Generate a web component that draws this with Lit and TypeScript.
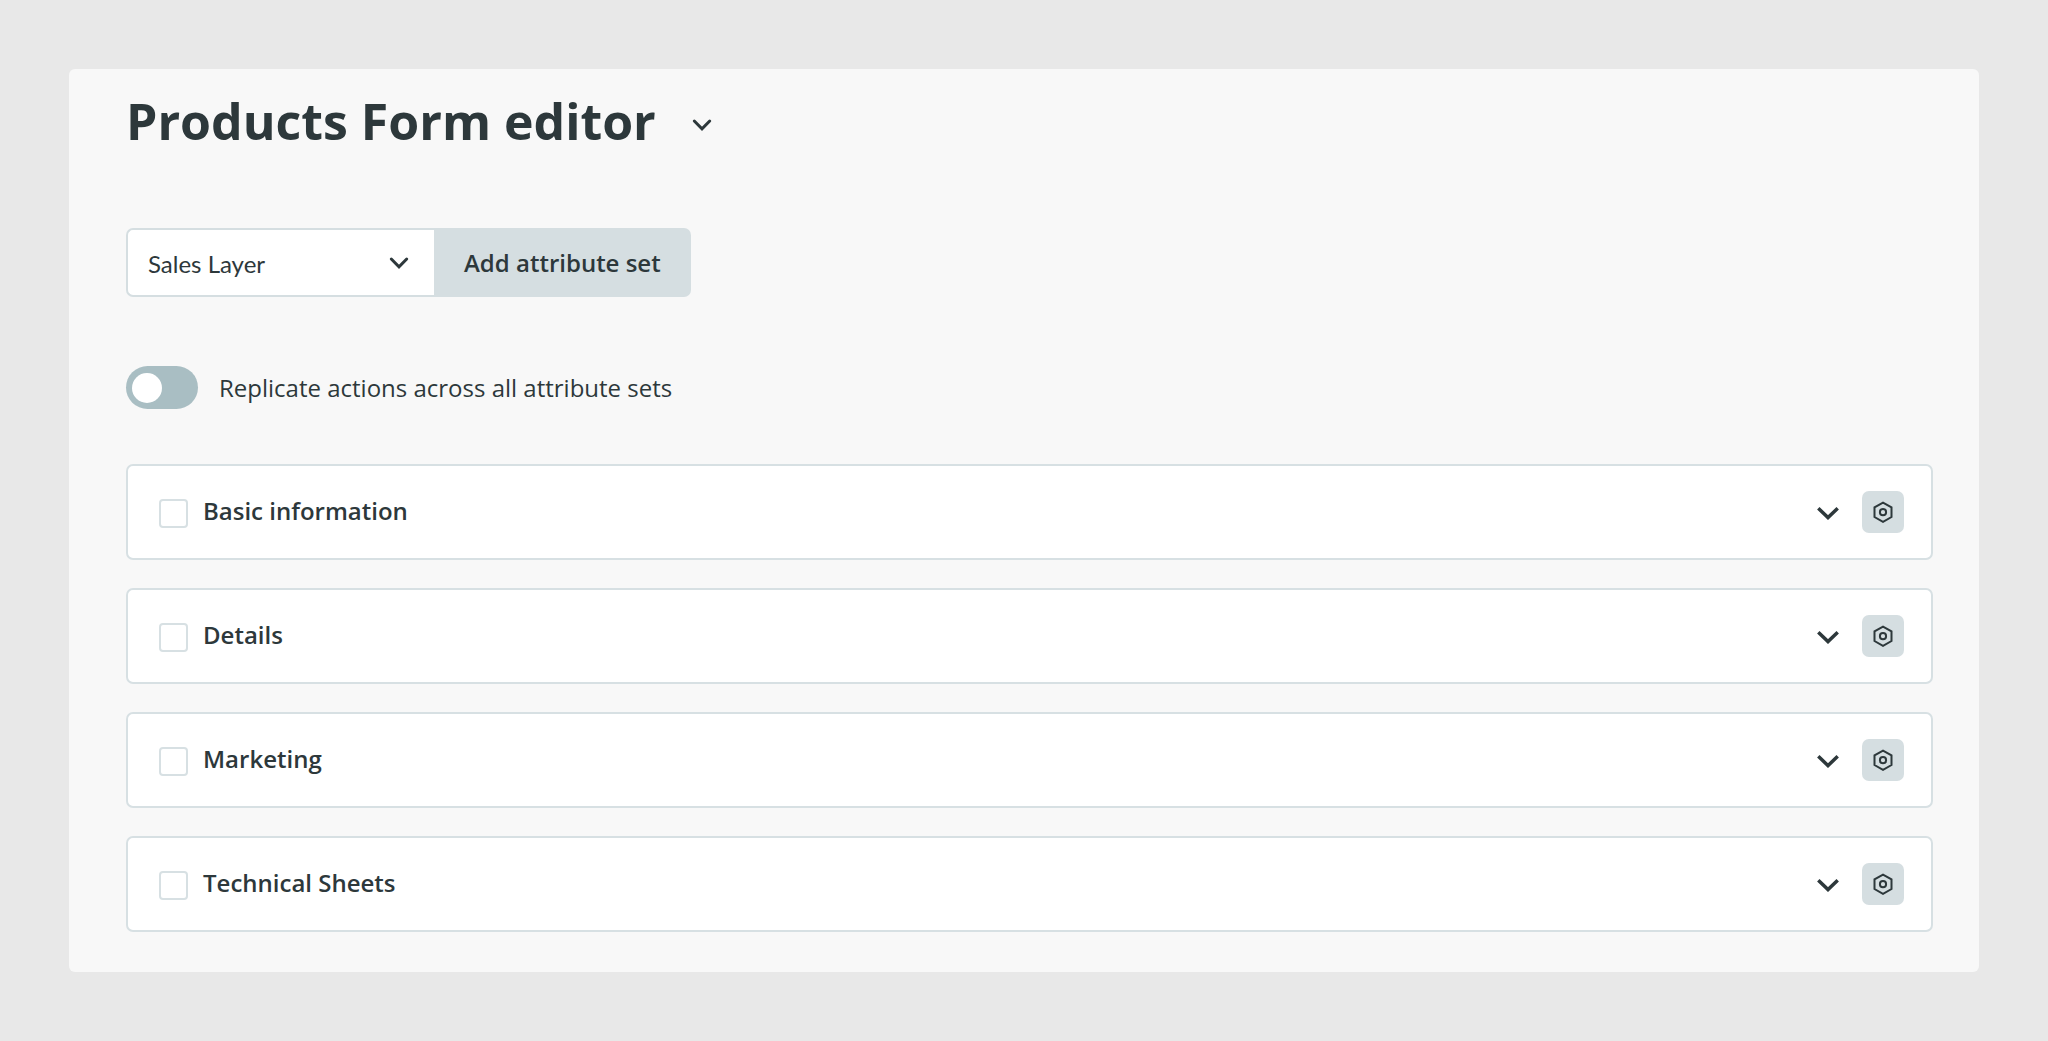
import { LitElement, html, css } from "lit";
import { customElement, property, state } from "lit/decorators.js";

/** One collapsible attribute set: tick box, name, expander and settings. */
@customElement("attribute-set")
export class AttributeSet extends LitElement {
  @property() name = "";
  @state() private open = false;

  static styles = css`
    :host {
      display: block;
      font-family: "Open Sans", "Noto Sans", sans-serif;
      color: #2d383b;
    }
    .card {
      box-sizing: border-box;
      display: flex;
      align-items: center;
      min-height: 96px;
      padding: 0 27px 0 31px;
      background: #ffffff;
      border: 2px solid #d7e0e3;
      border-radius: 7px;
    }
    .label {
      flex: 1;
      display: flex;
      align-items: center;
      gap: 15px;
      padding-bottom: 2px;
      font-size: 24px;
      line-height: 32px;
      font-weight: 600;
    }
    .tick {
      appearance: none;
      box-sizing: border-box;
      flex: none;
      width: 29px;
      height: 29px;
      margin: 4px 0 0;
      background: #ffffff;
      border: 2px solid #d7e0e3;
      border-radius: 4px;
    }
    .tick:checked {
      background: #a9bec3;
    }
    .actions {
      display: flex;
      align-items: center;
      gap: 18px;
    }
    .expand,
    .settings {
      display: grid;
      place-items: center;
      padding: 0;
      border: 0;
      color: inherit;
      cursor: pointer;
    }
    .expand {
      width: 32px;
      height: 42px;
      background: transparent;
    }
    .settings {
      width: 42px;
      height: 42px;
      background: #d5dee1;
      border-radius: 7px;
    }
    svg {
      display: block;
      fill: none;
      stroke: currentColor;
    }
  `;

  render() {
    return html`
      <div class="card">
        <label class="label"><input class="tick" type="checkbox" />${this.name}</label>
        <div class="actions">
          <button
            class="expand"
            aria-label="Expand ${this.name}"
            aria-expanded=${this.open ? "true" : "false"}
            @click=${() => (this.open = !this.open)}
          >
            <svg width="24" height="16" viewBox="0 0 24 16" stroke-width="3.5">
              <path d="M2.3 4.3 12 13.6 21.7 4.3" />
            </svg>
          </button>
          <button class="settings" aria-label="Settings for ${this.name}">
            <svg width="24" height="24" viewBox="0 0 24 24" stroke-width="2">
              <path d="M12 2.6 20.5 7.4v9.6L12 21.8 3.5 17V7.4z" />
              <circle cx="12" cy="12.2" r="3.1" />
            </svg>
          </button>
        </div>
      </div>
    `;
  }
}

@customElement("app-root")
export class AppRoot extends LitElement {
  private sets = ["Basic information", "Details", "Marketing", "Technical Sheets"];

  static styles = css`
    :host {
      display: block;
      box-sizing: border-box;
      min-height: 100vh;
      padding: 69px;
      background: #e8e8e8;
      color: #2d383b;
      font-family: "Open Sans", "Noto Sans", sans-serif;
    }
    .panel {
      padding: 17px 46px 40px 57px;
      background: #f8f8f8;
      border-radius: 6px;
    }
    .header {
      display: flex;
      align-items: center;
      gap: 28px;
      height: 70px;
    }
    .title {
      margin: 0;
      font-size: 50px;
      line-height: 70px;
      font-weight: 700;
    }
    .menu {
      display: grid;
      place-items: center;
      width: 36px;
      height: 36px;
      margin-top: 8px;
      padding: 0;
      border: 0;
      background: transparent;
      color: inherit;
      cursor: pointer;
    }
    svg {
      display: block;
      fill: none;
      stroke: currentColor;
    }
    .picker {
      display: flex;
      width: fit-content;
      height: 69px;
      margin-top: 72px;
    }
    .select-box {
      display: grid;
      align-items: center;
      width: 308px;
    }
    .select {
      grid-area: 1 / 1;
      appearance: none;
      box-sizing: border-box;
      width: 100%;
      height: 69px;
      margin: 0;
      padding: 2px 56px 0 20px;
      background: #ffffff;
      border: 2px solid #d5dee1;
      border-right: 0;
      border-radius: 7px 0 0 7px;
      color: inherit;
      font-family: Lato, "Open Sans", sans-serif;
      font-size: 24px;
    }
    .select-arrow {
      grid-area: 1 / 1;
      justify-self: end;
      margin-right: 23px;
      pointer-events: none;
    }
    .add {
      padding: 0 30px 1px;
      border: 0;
      border-radius: 0 7px 7px 0;
      background: #d5dee1;
      color: inherit;
      font-family: inherit;
      font-size: 24px;
      font-weight: 600;
      cursor: pointer;
    }
    .replicate {
      display: flex;
      align-items: center;
      gap: 21px;
      width: fit-content;
      margin-top: 69px;
      font-size: 24px;
      line-height: 43px;
    }
    .switch {
      appearance: none;
      box-sizing: border-box;
      display: flex;
      align-items: center;
      width: 72px;
      height: 43px;
      margin: 0;
      padding: 0 6px;
      border-radius: 22px;
      background: #a9bec3;
    }
    .switch::before {
      content: "";
      width: 30px;
      height: 30px;
      border-radius: 50%;
      background: #ffffff;
    }
    .switch:checked {
      justify-content: flex-end;
    }
    .sets {
      display: grid;
      gap: 28px;
      margin-top: 55px;
    }
  `;

  render() {
    const chevron = html`
      <svg width="24" height="16" viewBox="0 0 24 16" stroke-width="3" stroke-linecap="round">
        <path d="M4.3 4 12 11.8 19.7 4" />
      </svg>
    `;
    return html`
      <main class="panel">
        <header class="header">
          <h1 class="title">Products Form editor</h1>
          <button class="menu" aria-label="Choose form">${chevron}</button>
        </header>
        <div class="picker">
          <div class="select-box">
            <select class="select" aria-label="Attribute set">
              <option>Sales Layer</option>
            </select>
            <span class="select-arrow">${chevron}</span>
          </div>
          <button class="add">Add attribute set</button>
        </div>
        <label class="replicate">
          <input class="switch" type="checkbox" role="switch" />
          Replicate actions across all attribute sets
        </label>
        <section class="sets">
          ${this.sets.map((name) => html`<attribute-set .name=${name}></attribute-set>`)}
        </section>
      </main>
    `;
  }
}
